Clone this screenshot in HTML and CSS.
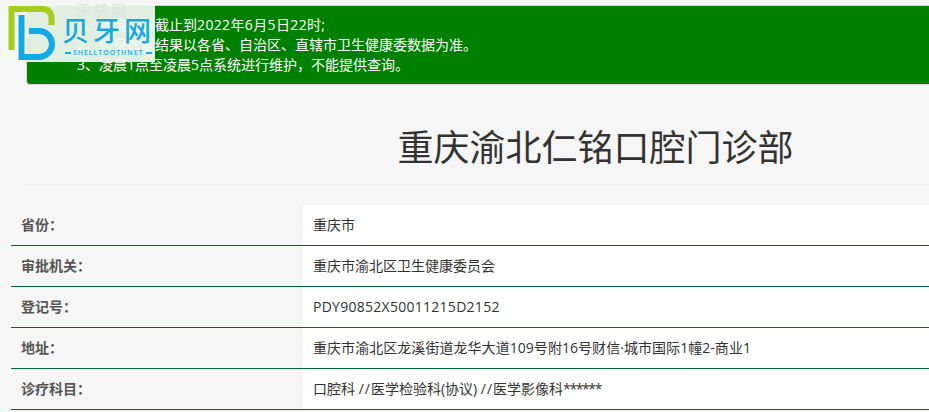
FILE: index.html
```html
<!DOCTYPE html>
<html lang="zh-CN">
<head>
<meta charset="utf-8">
<title>重庆渝北仁铭口腔门诊部</title>
<link rel="stylesheet" href="styles.css">
</head>
<body>
<div class="page">
  <div class="alert">
    <div>1、查询数据截止到<span class="date">2022年6月5日22时;</span></div>
    <div>2、信息数据结果以各省、自治区、直辖市卫生健康委数据为准。</div>
    <div>3、凌晨1点至凌晨5点系统进行维护，不能提供查询。</div>
  </div>
  <div class="header"><h1 class="title">重庆渝北仁铭口腔门诊部</h1></div>
  <table class="info">
    <tr><th>省份：</th><td>重庆市</td></tr>
    <tr><th>审批机关：</th><td>重庆市渝北区卫生健康委员会</td></tr>
    <tr><th>登记号：</th><td class="code">PDY90852X50011215D2152</td></tr>
    <tr><th>地址：</th><td class="addr">重庆市渝北区龙溪街道龙华大道109号附16号财信·城市国际1幢2-商业1</td></tr>
    <tr><th>诊疗科目：</th><td>口腔科 <span class="slash">//</span>医学检验科(协议) <span class="slash">//</span>医学影像科<span class="stars">******</span></td></tr>
  </table>
</div>
<div class="logo">
  <span class="logo-ghost">牙舒网</span>
  <svg class="logo-mark" width="60" height="60" viewBox="0 0 60 60" fill="none">
    <path d="M8.5 47V6H39Q48.5 6 48.5 16V22" stroke="#a4cd1e" stroke-width="6"/>
    <path d="M18.5 12V54H36A13 13 0 0 0 36 28H26" stroke="#12a9e6" stroke-width="6"/>
  </svg>
  <span class="logo-cn">贝牙网</span>
  <span class="logo-en">SHELLTOOTHNET</span>
</div>
</body>
</html>
```
FILE: styles.css
```css
* { box-sizing: border-box; }
html, body { margin: 0; height: 412px; overflow: hidden; }
body {
  background: #f6f6f6;
  color: #333;
  font: 14px/20px "Open Sans", "Noto Sans CJK SC", sans-serif;
}
.page { width: 1165px; padding-top: 5px; }
.alert {
  margin-left: 26px;
  height: 80px;
  padding: 9px 0 0 50px;
  background: #008000;
  border: 1px solid #ebccd1;
  border-radius: 4px;
  color: #fff;
}
.date { letter-spacing: .36px; }
.header {
  margin-left: 26px;
  height: 100px;
  padding-top: 40px;
  border-bottom: 1px solid #eee;
  text-align: center;
}
.title {
  margin: 0;
  font-size: 36px;
  line-height: 46px;
  font-weight: 400;
}
.info {
  margin: 20px 0 0 11px;
  width: 1154px;
  border-collapse: separate;
  border-spacing: 0;
  table-layout: fixed;
}
.info th, .info td {
  height: 41px;
  padding: 0 10px;
  border-bottom: 1px solid #006633;
  text-align: left;
}
.info th { width: 292px; font-weight: 700; color: #555; }
.info td { background: #fff; }
.info .code { letter-spacing: .27px; }
.info .addr { letter-spacing: .05px; }
.slash { letter-spacing: 1px; }
.stars { letter-spacing: -1.4px; }
.logo {
  position: absolute;
  left: 3px;
  top: 3px;
  width: 152px;
  height: 59px;
  background: rgba(243, 249, 243, .92);
}
.logo-ghost {
  position: absolute;
  left: 72px;
  top: 0;
  font-size: 15px;
  line-height: 15px;
  letter-spacing: 3px;
  color: #dde6dd;
  white-space: nowrap;
}
.logo-mark { position: absolute; left: 0; top: 0; }
.logo-cn {
  position: absolute;
  left: 59px;
  top: 11px;
  font-size: 27px;
  line-height: 34px;
  font-weight: 500;
  letter-spacing: 4px;
  color: #19a8e0;
  white-space: nowrap;
}
.logo-en {
  position: absolute;
  left: 62px;
  top: 45px;
  display: flex;
  align-items: center;
  gap: 2px;
  font-size: 7px;
  line-height: 9px;
  font-weight: 600;
  letter-spacing: .95px;
  color: #19a8e0;
  white-space: nowrap;
}
.logo-en::before, .logo-en::after {
  content: "";
  width: 6px;
  height: 2px;
  background: #19a8e0;
}
```
